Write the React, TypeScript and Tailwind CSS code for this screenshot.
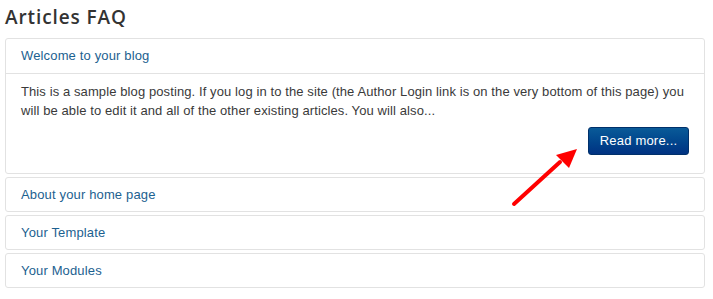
const panels = ["About your home page", "Your Template", "Your Modules"];

export default function App() {
  return (
    <div className="relative w-[713px] h-[299px] bg-white px-[5px] pt-[4px] font-['Liberation_Sans',Arial,sans-serif]">
      <h1 className="font-['Open_Sans',sans-serif] font-semibold text-[19px] leading-[26px] tracking-[0.9px] text-[#333]">
        Articles FAQ
      </h1>

      <div className="mt-[8px] w-[700px] flex flex-col gap-[3px]">
        <div className="border border-[#e2e2e2] rounded-[3px]">
          <div className="h-[35px] px-[15px] flex items-center border-b border-[#e2e2e2] text-[13px] tracking-[0.15px] text-[#1c6190]">
            Welcome to your blog
          </div>
          <div className="px-[15px] pt-[8px] pb-[18px]">
            <p className="text-[13px] leading-[19px] tracking-[0.1px] text-[#3a3a3a]">
              This is a sample blog posting. If you log in to the site (the Author Login link is on the very bottom of
              this page) you will be able to edit it and all of the other existing articles. You will also...
            </p>
            <div className="flex justify-end mt-[7px]">
              <button className="w-[101px] h-[28px] rounded-[3px] border border-[#00306a] bg-gradient-to-b from-[#0a5a98] to-[#013282] text-white text-[13px] tracking-[0.2px]">
                Read more...
              </button>
            </div>
          </div>
        </div>

        {panels.map((t) => (
          <div
            key={t}
            className="h-[35px] px-[15px] flex items-center border border-[#e2e2e2] rounded-[3px] text-[13px] tracking-[0.15px] text-[#1c6190]"
          >
            {t}
          </div>
        ))}
      </div>

      <svg className="absolute left-0 top-0" width="713" height="299" viewBox="0 0 713 299">
        <line x1="514" y1="204" x2="560" y2="162" stroke="#ff0000" strokeWidth="4" strokeLinecap="round" />
        <polygon points="577,149 556,155 569,168" fill="#ff0000" />
      </svg>
    </div>
  );
}
